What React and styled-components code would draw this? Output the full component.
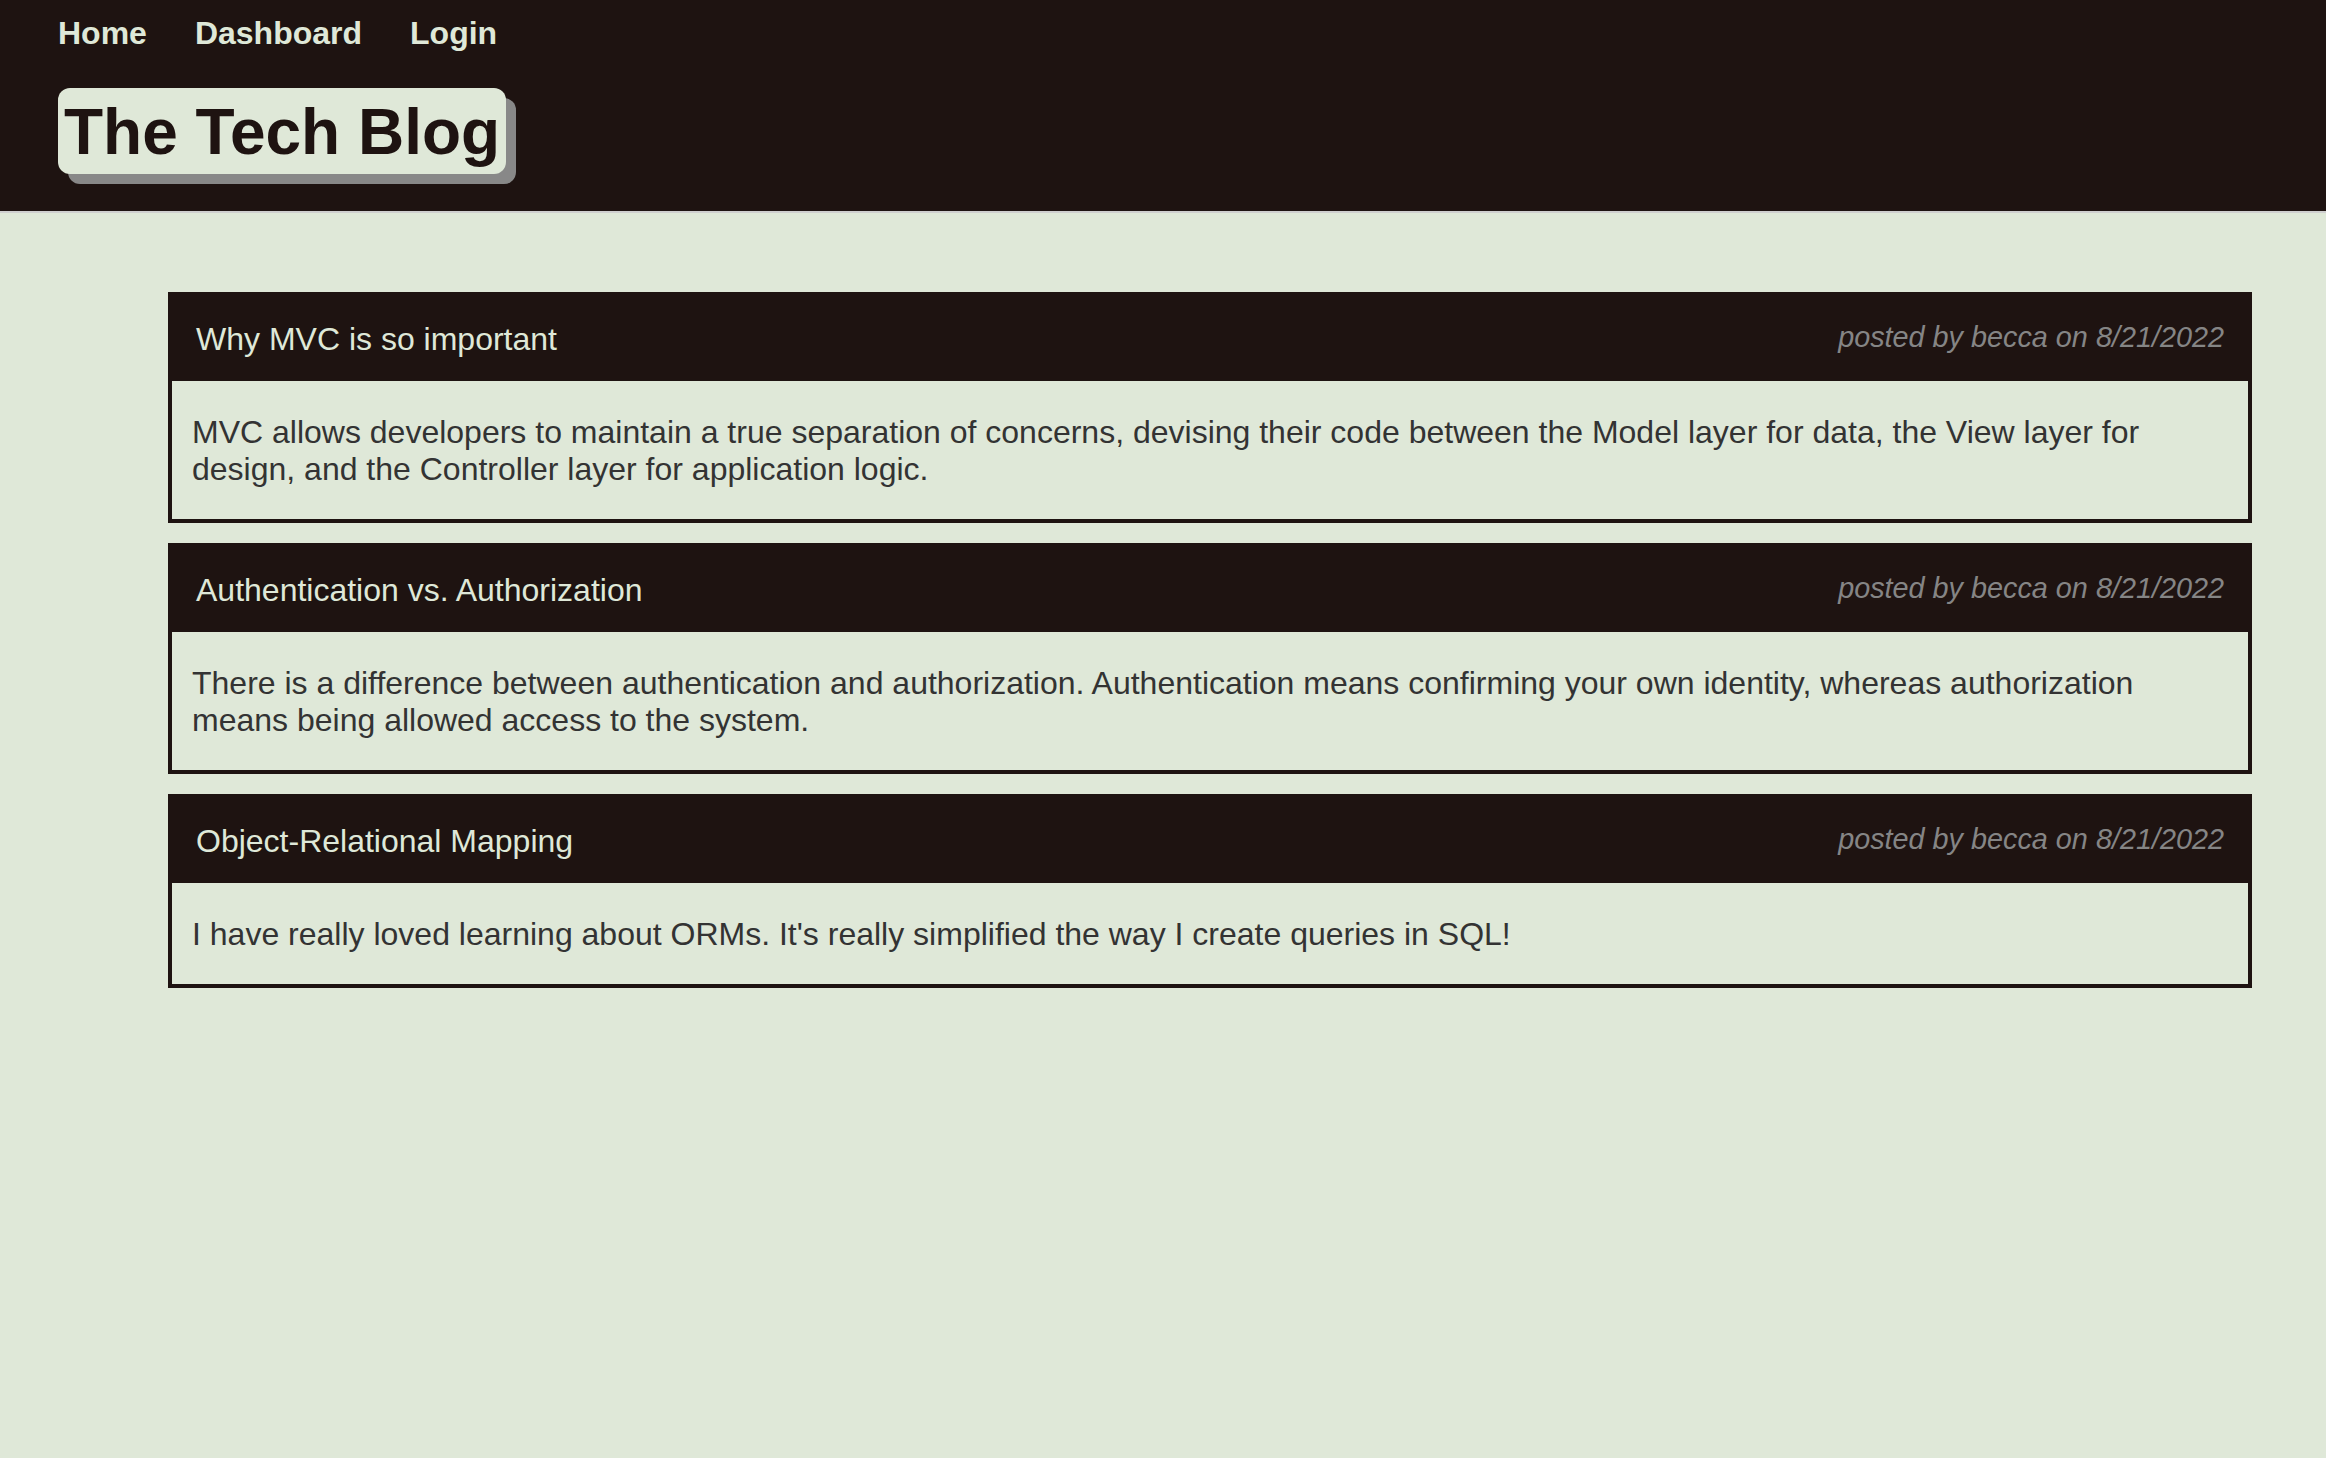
import React from 'react';
import styled, { createGlobalStyle } from 'styled-components';

const GlobalStyle = createGlobalStyle`
  html, body {
    margin: 0;
    padding: 0;
    background: #dfe8d8;
    font-family: "Liberation Sans", Arial, Helvetica, sans-serif;
  }
  #root {
    min-height: 100vh;
  }
`;

const Header = styled.header`
  background: #1e1311;
  padding: 15px 58px 37px;
  border-bottom: 2px solid #cfcfcf;
`;

const Nav = styled.nav`
  display: flex;
  gap: 48px;
`;

const NavLink = styled.a`
  color: #dfe8d8;
  font-size: 32px;
  font-weight: 700;
  text-decoration: none;
  cursor: pointer;
`;

const Title = styled.h1`
  display: inline-block;
  margin: 36px 0 0;
  padding: 7px 6px 5px 6px;
  background: #dfe8d8;
  color: #1e1311;
  font-size: 64px;
  font-weight: 700;
  border-radius: 12px;
  box-shadow: 10px 10px 0 #888888;
`;

const Main = styled.main`
  padding: 79px 74px 40px 168px;
  display: flex;
  flex-direction: column;
  gap: 20px;
`;

const Card = styled.article`
  border: 4px solid #1e1311;
`;

const CardHead = styled.div`
  display: flex;
  justify-content: space-between;
  align-items: flex-start;
  background: #1e1311;
  padding: 25px 24px 23px;
`;

const PostTitle = styled.h2`
  margin: 0;
  color: #dfe8d8;
  font-size: 32px;
  font-weight: 400;
`;

const PostMeta = styled.span`
  color: #858585;
  font-size: 28.8px;
  font-style: italic;
`;

const CardBody = styled.p`
  margin: 0;
  padding: 33px 20px 31px;
  color: #333333;
  font-size: 32px;
`;

const posts = [
  {
    title: 'Why MVC is so important',
    body: 'MVC allows developers to maintain a true separation of concerns, devising their code between the Model layer for data, the View layer for design, and the Controller layer for application logic.',
  },
  {
    title: 'Authentication vs. Authorization',
    body: 'There is a difference between authentication and authorization. Authentication means confirming your own identity, whereas authorization means being allowed access to the system.',
  },
  {
    title: 'Object-Relational Mapping',
    body: "I have really loved learning about ORMs. It's really simplified the way I create queries in SQL!",
  },
];

const App = () => {
  return (
    <>
      <GlobalStyle />
      <Header>
        <Nav>
          <NavLink>Home</NavLink>
          <NavLink>Dashboard</NavLink>
          <NavLink>Login</NavLink>
        </Nav>
        <Title>The Tech Blog</Title>
      </Header>
      <Main>
        {posts.map((post) => (
          <Card key={post.title}>
            <CardHead>
              <PostTitle>{post.title}</PostTitle>
              <PostMeta>posted by becca on 8/21/2022</PostMeta>
            </CardHead>
            <CardBody>{post.body}</CardBody>
          </Card>
        ))}
      </Main>
    </>
  );
};

export default App;
